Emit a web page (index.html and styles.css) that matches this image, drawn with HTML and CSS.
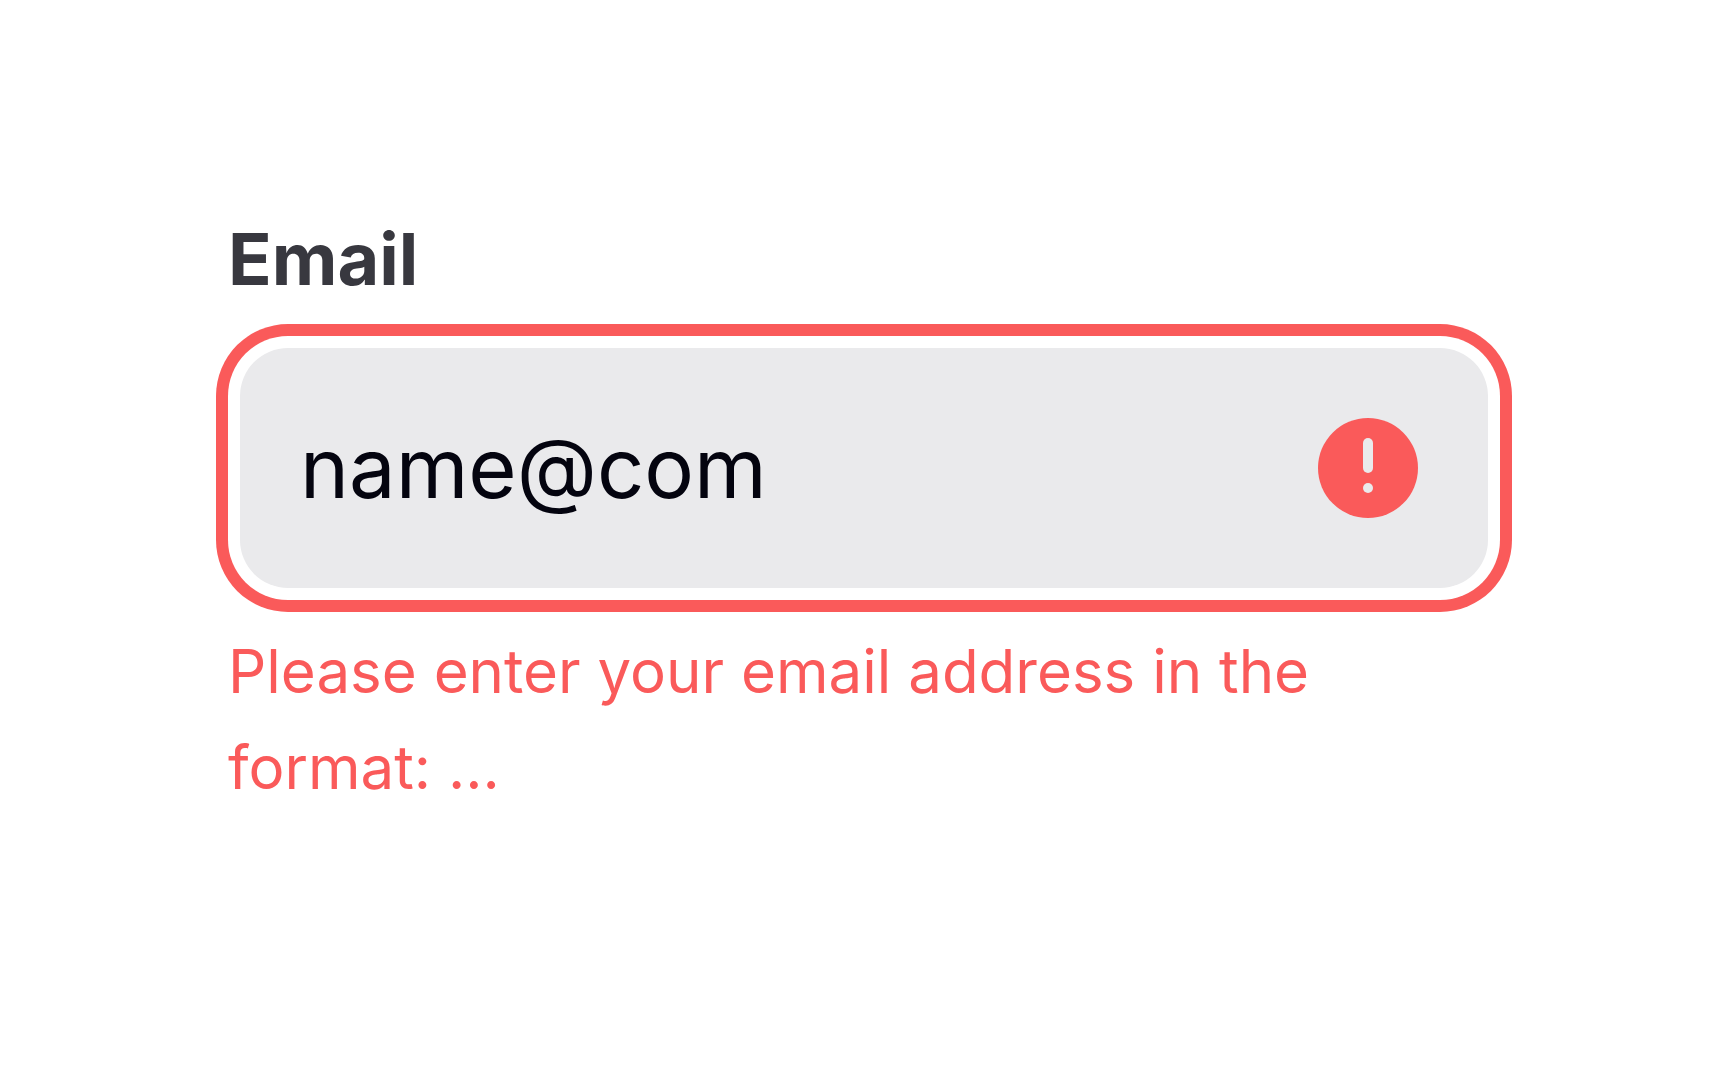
FILE: index.html
```html
<!DOCTYPE html>
<html lang="en">
<head>
  <meta charset="utf-8">
  <meta name="viewport" content="width=device-width, initial-scale=1">
  <title>Email field</title>
  <link rel="stylesheet" href="styles.css">
</head>
<body>
  <main class="field">
    <label class="field-label" for="email">Email</label>
    <div class="field-box">
      <input class="field-input" id="email" type="email" value="name@com" aria-invalid="true" aria-describedby="email-error">
      <svg class="field-icon" viewBox="0 0 100 100" aria-hidden="true">
        <circle cx="50" cy="50" r="50" fill="#fa5a5a"/>
        <path d="M50 25v25" stroke="#eaeaec" stroke-width="10" stroke-linecap="round"/>
        <circle cx="50" cy="70" r="5" fill="#eaeaec"/>
      </svg>
    </div>
    <p class="field-error" id="email-error">Please enter your email address in the format: ...</p>
  </main>
</body>
</html>
```

FILE: styles.css
```css
* {
  box-sizing: border-box;
}

body {
  margin: 0;
  min-height: 100vh;
  padding: 211px 228px;
  background: #fff;
  font-family: Inter, "Liberation Sans", sans-serif;
}

.field {
  display: flex;
  flex-direction: column;
}

.field-label {
  color: #38383f;
  font-size: 72px;
  font-weight: 700;
  line-height: 96px;
}

.field-box {
  display: flex;
  align-items: center;
  gap: 24px;
  height: 240px;
  margin: 41px 12px 35px;
  padding: 0 70px 0 60px;
  border-radius: 48px;
  background: #eaeaec;
  box-shadow: 0 0 0 12px #fff, 0 0 0 24px #fa5a5a;
}

.field-input {
  flex: 1;
  min-width: 0;
  padding: 0;
  border: 0;
  outline: 0;
  background: transparent;
  color: #04040f;
  font: 400 83px/120px Inter, "Liberation Sans", sans-serif;
}

.field-icon {
  flex: none;
  width: 100px;
  height: 100px;
}

.field-error {
  margin: 0;
  color: #fa5a5a;
  font-size: 60px;
  line-height: 96px;
}
```
